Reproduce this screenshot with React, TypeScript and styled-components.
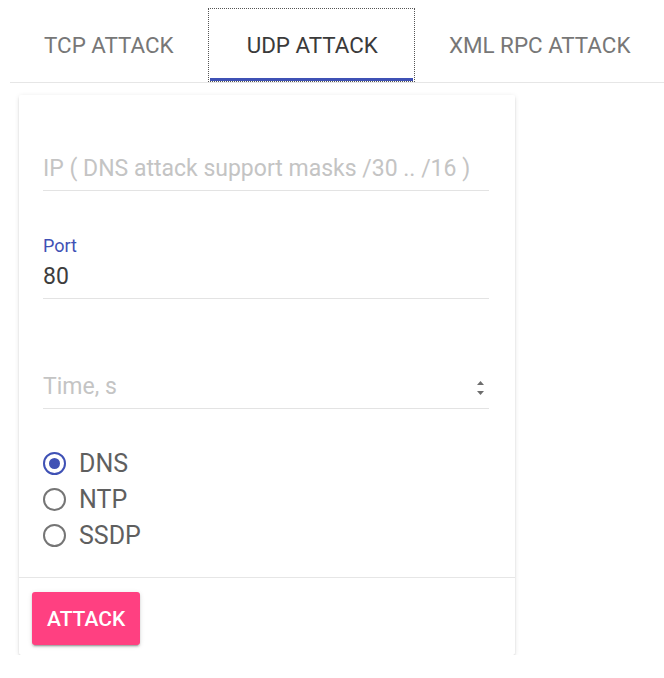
import styled, { createGlobalStyle } from "styled-components";

const GlobalStyle = createGlobalStyle`
  body {
    margin: 0;
    background: #fff;
    font-family: Roboto, "Noto Sans", sans-serif;
  }
`;

const Page = styled.div`
  padding-top: 8px;
`;

const TabBar = styled.div`
  display: flex;
  margin-left: 10px;
  border-bottom: 1px solid #e6e6e6;
`;

const Tab = styled.div<{ $active?: boolean }>`
  box-sizing: border-box;
  height: 74px;
  padding: ${(p) => (p.$active ? "0 37px 0 39px" : "0 34px")};
  display: flex;
  align-items: center;
  font-size: 22.4px;
  font-weight: 400;
  text-transform: uppercase;
  white-space: nowrap;
  color: ${(p) => (p.$active ? "#3a3a3a" : "#777")};
  position: relative;
  outline: ${(p) => (p.$active ? "1px dotted #555" : "none")};
  outline-offset: -1px;

  &::after {
    content: "";
    display: ${(p) => (p.$active ? "block" : "none")};
    position: absolute;
    left: 2px;
    right: 2px;
    bottom: 1px;
    height: 3px;
    background: #3f51b5;
  }
`;

const Clip = styled.div`
  width: 520px;
  margin-left: 7px;
  padding: 12px 12px 0;
  overflow: hidden;
`;

const Card = styled.div`
  width: 496px;
  background: #fff;
  border-radius: 2px;
  box-shadow: 0 2px 2px 0 rgba(0, 0, 0, 0.12), 0 3px 1px -2px rgba(0, 0, 0, 0.1),
    0 1px 5px 0 rgba(0, 0, 0, 0.1);
`;

const Body = styled.div`
  padding: 33px 26px 24px 24px;
`;

const Field = styled.div<{ $gap?: number }>`
  margin-top: ${(p) => p.$gap ?? 0}px;
  padding-bottom: 6px;
  border-bottom: 1px solid #e3e3e3;
`;

const FloatLabel = styled.div`
  height: 20px;
  line-height: 20px;
  margin-bottom: 6px;
  font-size: 18px;
  color: #3f51b5;
`;

const ValueRow = styled.div`
  display: flex;
  align-items: center;
  justify-content: space-between;
  height: 30px;
`;

const Value = styled.span<{ $placeholder?: boolean }>`
  font-size: 23px;
  line-height: 30px;
  white-space: nowrap;
  color: ${(p) => (p.$placeholder ? "#c4c4c4" : "#3d3d3d")};
`;

const Spinner = styled.svg`
  margin-right: 4px;
  margin-top: 2px;
`;

const RadioGroup = styled.div`
  margin-top: 36px;
`;

const RadioRow = styled.label`
  display: flex;
  align-items: center;
  height: 36px;
  gap: 13px;
  font-size: 25px;
  color: #5f5f5f;
`;

const RadioCircle = styled.span<{ $checked?: boolean }>`
  box-sizing: border-box;
  width: 23px;
  height: 23px;
  border-radius: 50%;
  border: 2.5px solid ${(p) => (p.$checked ? "#3f51b5" : "#757575")};
  display: flex;
  align-items: center;
  justify-content: center;

  &::after {
    content: "";
    display: ${(p) => (p.$checked ? "block" : "none")};
    width: 11px;
    height: 11px;
    border-radius: 50%;
    background: #3f51b5;
  }
`;

const Actions = styled.div`
  border-top: 1px solid #e6e6e6;
  padding: 14px 13px 10px;
`;

const AttackButton = styled.button`
  height: 53px;
  padding: 0 15px;
  border: none;
  border-radius: 3px;
  background: #ff4081;
  color: #fff;
  font-family: Roboto, "Noto Sans", sans-serif;
  font-size: 21px;
  font-weight: 500;
  text-transform: uppercase;
  box-shadow: 0 2px 2px 0 rgba(0, 0, 0, 0.14), 0 3px 1px -2px rgba(0, 0, 0, 0.2),
    0 1px 5px 0 rgba(0, 0, 0, 0.12);
`;

const radios = [
  { label: "DNS", checked: true },
  { label: "NTP", checked: false },
  { label: "SSDP", checked: false },
];

export default function App() {
  return (
    <Page>
      <GlobalStyle />
      <TabBar>
        <Tab>TCP Attack</Tab>
        <Tab $active>UDP Attack</Tab>
        <Tab>XML RPC Attack</Tab>
      </TabBar>
      <Clip>
        <Card>
          <Body>
            <Field>
              <FloatLabel />
              <ValueRow>
                <Value $placeholder>IP ( DNS attack support masks /30 .. /16 )</Value>
              </ValueRow>
            </Field>
            <Field $gap={45}>
              <FloatLabel>Port</FloatLabel>
              <ValueRow>
                <Value>80</Value>
              </ValueRow>
            </Field>
            <Field $gap={47}>
              <FloatLabel />
              <ValueRow>
                <Value $placeholder>Time, s</Value>
                <Spinner width="9" height="16" viewBox="0 0 9 16">
                  <path d="M4.5 1 L8 5 L1 5 Z" fill="#6d6d6d" />
                  <path d="M1 11 L8 11 L4.5 15 Z" fill="#6d6d6d" />
                </Spinner>
              </ValueRow>
            </Field>
            <RadioGroup>
              {radios.map((r) => (
                <RadioRow key={r.label}>
                  <RadioCircle $checked={r.checked} />
                  {r.label}
                </RadioRow>
              ))}
            </RadioGroup>
          </Body>
          <Actions>
            <AttackButton>Attack</AttackButton>
          </Actions>
        </Card>
      </Clip>
    </Page>
  );
}
